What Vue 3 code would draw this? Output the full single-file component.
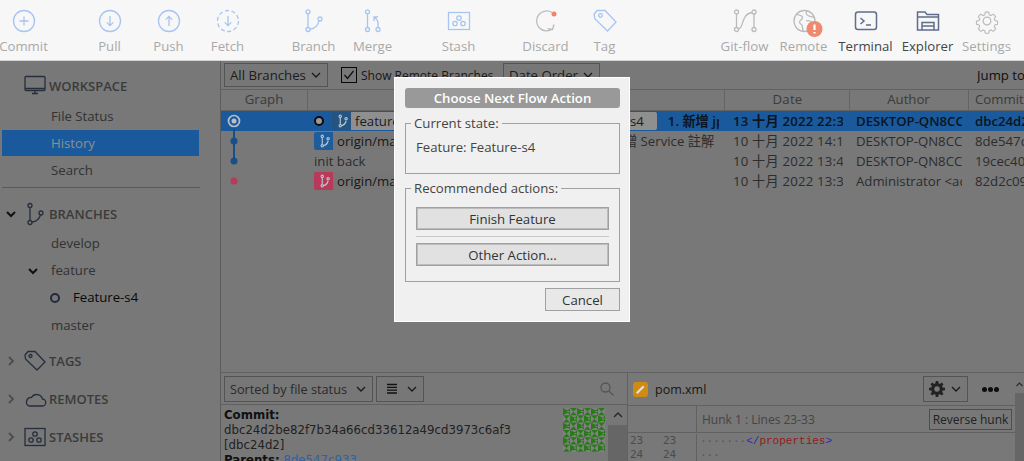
<script setup>
const rows = [
  { id: 1, date: '13 十月 2022 22:34', author: 'DESKTOP-QN8CCU1', hash: 'dbc24d2b', selected: true },
  { id: 2, date: '10 十月 2022 14:13', author: 'DESKTOP-QN8CCU1', hash: '8de547c9' },
  { id: 3, date: '10 十月 2022 13:45', author: 'DESKTOP-QN8CCU1', hash: '19cec402' },
  { id: 4, date: '10 十月 2022 13:32', author: 'Administrator <admin>', hash: '82d2c09a' }
]
const branchPath = 'M4.5 1a1 1 0 1 0 .01 0M4.5 3v6M4.5 9a1 1 0 1 0 .01 0M5.5 10c2.500-.5 3.500-2 4-4M9.500 3a1 1 0 1 0 .01 0'
const greens = []
for (let y = 0; y < 6; y++) {
  for (let x = 0; x < 6; x++) {
    const px = x * 7
    const py = y * 7.3
    greens.push((x + y) % 2 === 0
      ? `M${px} ${py}l7 3.6l-7 3.6zM${px + 7} ${py}l-3 3.6l3 3.6z`
      : `M${px} ${py}h7l-3.5 3.6zM${px} ${py + 7.3}h7l-3.5 -3.6z`)
  }
}
const identicon = greens.join('')
</script>

<template>
  <div class="app">
    <header class="toolbar">
      <div class="tool">
        <svg class="ico" viewBox="0 0 24 24"><circle cx="12" cy="12" r="10.5"/><path d="M12 7.5v9M7.5 12h9"/></svg>
        <span>Commit</span>
      </div>
      <div class="tool gap">
        <svg class="ico" viewBox="0 0 24 24"><circle cx="12" cy="12" r="10.5"/><path d="M12 7v9.5M8.8 13.4l3.2 3.2 3.2-3.2"/></svg>
        <span>Pull</span>
      </div>
      <div class="tool">
        <svg class="ico" viewBox="0 0 24 24"><circle cx="12" cy="12" r="10.5"/><path d="M12 17V7.5M8.8 10.6L12 7.4l3.2 3.2"/></svg>
        <span>Push</span>
      </div>
      <div class="tool">
        <svg class="ico" viewBox="0 0 24 24"><circle cx="12" cy="12" r="10.5" stroke-dasharray="4 2.6"/><path d="M12 7v9.5M8.8 13.4l3.2 3.2 3.2-3.2"/></svg>
        <span>Fetch</span>
      </div>
      <div class="tool gap">
        <svg class="ico" viewBox="0 0 24 24"><circle cx="6" cy="2.8" r="2"/><circle cx="6" cy="20.5" r="2"/><circle cx="18" cy="10" r="2"/><path d="M6 4.8v13.7M8 20.2c5-.5 8-3.500 9-8.500"/></svg>
        <span>Branch</span>
      </div>
      <div class="tool">
        <svg class="ico" viewBox="0 0 24 24"><circle cx="6.5" cy="2.8" r="2"/><circle cx="6.5" cy="20.5" r="2"/><circle cx="17" cy="20.5" r="2"/><path d="M6.5 4.8v13.7M17 18.500v-5c0-2-1.500-3-3.500-5.500M13 12V8h4"/></svg>
        <span>Merge</span>
      </div>
      <div class="tool gap">
        <svg class="ico" viewBox="0 0 24 24"><rect x="1.5" y="3.5" width="21" height="17"/><circle cx="12" cy="9" r="2.2"/><circle cx="8" cy="14.5" r="2.2"/><circle cx="16" cy="14.5" r="2.2"/></svg>
        <span>Stash</span>
      </div>
      <div class="tool gap discard">
        <svg class="ico" viewBox="0 0 24 24"><path class="grey" d="M18 3.500A10 10 0 1 0 18.500 20M20 15.500l-1.500 5-5-.8"/><circle class="dot" cx="20" cy="5" r="2.500"/></svg>
        <span>Discard</span>
      </div>
      <div class="tool">
        <svg class="ico" viewBox="0 0 24 24"><path d="M1 5.500L4 1.500h8l11 11.500-8.500 9L2 10z"/><circle cx="7.500" cy="6.500" r="1.800"/></svg>
        <span>Tag</span>
      </div>
      <div class="right">
        <div class="tool">
          <svg class="ico" viewBox="0 0 24 24"><g class="grey"><circle cx="3.500" cy="3" r="2"/><circle cx="3.500" cy="20.500" r="2"/><circle cx="21" cy="3" r="2"/><circle cx="21" cy="20.500" r="2"/><path d="M3.500 5v13.500M21 5v13.500M5.500 20c5.500-1 2.500-15 13.500-16.500"/></g></svg>
          <span>Git-flow</span>
        </div>
        <div class="tool">
          <svg class="ico" viewBox="0 0 24 24"><circle class="grey" cx="12.500" cy="12" r="10.500"/><path class="grey" d="M4.500 5c3 2 5 1 6 3s-3 3-3 5 3 2 3 5 1 4 1 4M15 2c-2 3 0 4 2 5s4 0 5 2M14 12c2-1 5 0 6 2"/><circle class="badge" cx="22.500" cy="20" r="8"/><path class="bang" d="M22.500 15.500v5.500M22.500 23v1.600"/></svg>
          <span>Remote</span>
        </div>
        <div class="tool active">
          <svg class="ico" viewBox="0 0 24 24"><rect x="1.500" y="3" width="21" height="17.500" rx="2.500"/><path d="M6.500 9l3.500 3-3.500 3M12 16h5"/></svg>
          <span>Terminal</span>
        </div>
        <div class="tool active">
          <svg class="ico" viewBox="0 0 24 24"><path d="M1.500 21V3h7.500l2 2.500h11.500V21zM1.500 8h21"/><path d="M6 21v-7.500h12V21M6 17h12"/></svg>
          <span>Explorer</span>
        </div>
        <div class="tool">
          <svg class="ico" viewBox="0 0 24 24"><g class="grey"><circle cx="12" cy="12" r="3.800"/><path d="M10 1.500h4l.7 3.200 2 .9 2.800-1.700 2.700 2.800-1.700 2.700.9 2.100 3 .6v3.800l-3 .7-.9 2 1.700 2.800-2.700 2.800-2.800-1.700-2 .8-.7 3.100h-4l-.7-3.100-2-.8-2.800 1.700-2.700-2.800 1.700-2.800-.9-2-3-.7v-3.800l3-.6.9-2.100-1.700-2.700 2.700-2.800 2.800 1.700 2-.9z" transform="translate(1.800 1.800) scale(.85)"/></g></svg>
          <span>Settings</span>
        </div>
      </div>
    </header>

    <div class="stage">
      <main class="main">
        <aside class="sidebar">
          <div class="head first-head">
            <i class="chev"></i>
            <svg class="side-ico" viewBox="0 0 22 22"><rect x="1" y="1.500" width="20" height="14" rx="1"/><path d="M1 13.500h20M8 18.500h6M11 15.500v3"/></svg>
            <b>WORKSPACE</b>
          </div>
          <div class="item">File Status</div>
          <div class="item on">History</div>
          <div class="item">Search</div>
          <hr class="rule">

          <div class="head branches">
            <svg class="chev" viewBox="0 0 12 12"><path class="dark" d="M2 4l4 4 4-4"/></svg>
            <svg class="side-ico" viewBox="0 0 22 22"><circle cx="6" cy="2.500" r="2"/><circle cx="6" cy="19.500" r="2"/><circle cx="17" cy="10" r="2"/><path d="M6 4.500v13M8 19c5-.5 7.500-3.500 8.500-7"/></svg>
            <b>BRANCHES</b>
          </div>
          <div class="item">develop</div>
          <div class="item parent">
            <svg class="chev small" viewBox="0 0 12 12"><path class="dark" d="M2 4l4 4 4-4"/></svg>
            feature
          </div>
          <div class="item current"><i class="ring"></i><strong>Feature-s4</strong></div>
          <div class="item last">master</div>

          <div class="head tags">
            <svg class="chev" viewBox="0 0 12 12"><path class="mid" d="M4 2l4 4-4 4"/></svg>
            <svg class="side-ico" viewBox="0 0 22 22"><path d="M1 5l3-3.500h7l10 10.500-8 8L1.500 9z"/><circle cx="6.500" cy="6" r="1.500"/></svg>
            <b>TAGS</b>
          </div>
          <div class="head next">
            <svg class="chev" viewBox="0 0 12 12"><path class="mid" d="M4 2l4 4-4 4"/></svg>
            <svg class="side-ico" viewBox="0 0 22 22"><path d="M5 18h13a3.500 3.500 0 0 0 .5-7 6 6 0 0 0-11-1.500A4.500 4.500 0 0 0 5 18z"/></svg>
            <b>REMOTES</b>
          </div>
          <div class="head next">
            <svg class="chev" viewBox="0 0 12 12"><path class="mid" d="M4 2l4 4-4 4"/></svg>
            <svg class="side-ico" viewBox="0 0 22 22"><rect x="1" y="2.500" width="20" height="17"/><circle cx="11" cy="8" r="2.200"/><circle cx="7" cy="14" r="2.200"/><circle cx="15" cy="14" r="2.200"/></svg>
            <b>STASHES</b>
          </div>
        </aside>

        <section class="content">
          <div class="filters">
            <div class="select branches-select">All Branches <svg viewBox="0 0 12 12"><path d="M2 4l4 4 4-4"/></svg></div>
            <label class="check"><span class="box"><svg viewBox="0 0 12 12"><path d="M1.500 6l3 3.500 6-7.500"/></svg></span>Show Remote Branches</label>
            <div class="select order-select">Date Order <svg viewBox="0 0 12 12"><path d="M2 4l4 4 4-4"/></svg></div>
            <span class="jump">Jump to:</span>
          </div>

          <div class="thead">
            <div class="c-graph">Graph</div>
            <div class="c-desc"></div>
            <div class="c-date">Date</div>
            <div class="c-author">Author</div>
            <div class="c-hash left">Commit</div>
          </div>

          <div class="tbody">
            <svg class="graph" viewBox="0 0 40 80">
              <path class="line" d="M13 10v40"/>
              <circle class="ring-outer" cx="13" cy="10" r="5.500"/>
              <circle class="ring-inner" cx="13" cy="10" r="2.500"/>
              <circle class="node" cx="13" cy="30" r="3.500"/>
              <circle class="node" cx="13" cy="50" r="3.500"/>
              <circle class="node red" cx="13" cy="70" r="3.500"/>
            </svg>
            <div v-for="row in rows" :key="row.id" class="row" :class="{ sel: row.selected }">
              <div class="c-graph"></div>
              <div class="c-desc">
                <template v-if="row.id === 1">
                  <i class="head-dot"></i>
                  <span class="tag-ico deep"><svg viewBox="0 0 12 12"><path :d="branchPath"/></svg></span><span class="lab first">feature/Feature-s4</span>
                  <span class="tag-ico deep"><svg viewBox="0 0 12 12"><path :d="branchPath"/></svg></span><span class="lab">origin/feature/Feature-s4</span>
                  <span class="msg strong">1. 新增 jpa</span>
                </template>
                <template v-else-if="row.id === 2">
                  <span class="tag-ico"><svg viewBox="0 0 12 12"><path :d="branchPath"/></svg></span><span class="lab">origin/master</span>
                  <span class="msg">2. 新增 Service 註解</span>
                </template>
                <template v-else-if="row.id === 3">init back</template>
                <template v-else>
                  <span class="tag-ico red"><svg viewBox="0 0 12 12"><path :d="branchPath"/></svg></span><span class="lab">origin/main</span>
                </template>
              </div>
              <div class="c-date"><span>{{ row.date }}</span></div>
              <div class="c-author"><span>{{ row.author }}</span></div>
              <div class="c-hash"><span>{{ row.hash }}</span></div>
            </div>
          </div>

          <div class="bottom">
            <div class="left-pane">
              <div class="pane-bar">
                <div class="select sort">Sorted by file status <svg viewBox="0 0 12 12"><path d="M2 4l4 4 4-4"/></svg></div>
                <div class="select view">
                  <svg class="lines" viewBox="0 0 12 12"><path d="M1 1.500h10M1 4.300h10M1 7.100h10M1 10h10"/></svg>
                  <svg viewBox="0 0 12 12"><path d="M2 4l4 4 4-4"/></svg>
                </div>
                <svg class="search" viewBox="0 0 14 14"><circle cx="5.500" cy="5.500" r="4.500"/><path d="M9 9l4.500 4.500"/></svg>
              </div>
              <div class="commit">
                <div class="commit-text">
                  <b>Commit:</b><br>
                  dbc24d2be82f7b34a66cd33612a49cd3973c6af3<br>
                  [dbc24d2]<br>
                  <b>Parents:</b> <a>8de547c933</a>
                </div>
                <svg class="avatar" viewBox="0 0 42 44"><rect width="42" height="44" fill="#808080"/><path :d="identicon" fill="#2a7a1c"/></svg>
                <div class="scroll"><svg viewBox="0 0 12 12"><path d="M2 8l4-4 4 4"/></svg><i></i></div>
              </div>
            </div>
            <div class="right-pane">
              <div class="file-bar">
                <span class="file-ico"><svg viewBox="0 0 14 14"><path d="M3.500 10.500l6.500-6.500"/></svg></span>
                <span class="file-name">pom.xml</span>
                <div class="select gear">
                  <svg class="cog" viewBox="0 0 16 16"><path d="M6.800 0h2.400l.4 2.300 1.300.6L12.800 1.500l1.700 1.700-1.400 1.900.6 1.300 2.300.4v2.400l-2.300.4-.6 1.300 1.400 1.900-1.700 1.700-1.900-1.400-1.300.6-.4 2.300H6.800l-.4-2.300-1.300-.6-1.900 1.400-1.700-1.700 1.400-1.900-.6-1.300L0 9.200V6.800l2.300-.4.6-1.300L1.500 3.200l1.700-1.700 1.900 1.400 1.300-.6zM8 5.300a2.700 2.700 0 1 0 0 5.400 2.700 2.700 0 0 0 0-5.400z" fill-rule="evenodd"/></svg>
                  <svg viewBox="0 0 12 12"><path d="M2 4l4 4 4-4"/></svg>
                </div>
                <span class="dots"><i></i><i></i><i></i></span>
              </div>
              <div class="hunk">
                <div class="gutter-head"></div>
                <span class="hunk-title">Hunk 1 : Lines 23-33</span>
                <span class="rev">Reverse hunk</span>
              </div>
              <div class="code">
                <div class="code-line"><span class="num">23</span><span class="num">23</span><code><em>·······</em><u>&lt;/</u><s>properties</s><u>&gt;</u></code></div>
                <div class="code-line"><span class="num">24</span><span class="num">24</span><code><em>···</em></code></div>
              </div>
              <div class="rscroll"><svg viewBox="0 0 12 12"><path d="M2 8l4-4 4 4"/></svg><i></i></div>
            </div>
          </div>
        </section>
      </main>

      <div class="overlay"></div>

      <div class="dialog">
        <div class="title">Choose Next Flow Action</div>
        <fieldset class="state">
          <legend>Current state:</legend>
          <p>Feature: Feature-s4</p>
        </fieldset>
        <fieldset class="actions">
          <legend>Recommended actions:</legend>
          <button>Finish Feature</button>
          <hr>
          <button>Other Action...</button>
        </fieldset>
        <div class="foot"><button>Cancel</button></div>
      </div>
    </div>
  </div>
</template>

<style>
html, body { margin: 0; overflow: hidden; }
</style>

<style scoped>
.app { width: 1024px; height: 461px; overflow: hidden; font-family: "Open Sans", "Noto Sans", "Noto Sans CJK TC", sans-serif; font-size: 13.2px; color: #444; background: #f5f5f5; display: flex; flex-direction: column; }

.toolbar { height: 60px; flex: none; display: flex; margin-left: -6px; background: #f7f7f7; border-bottom: 1px solid #d6d6d6; }
.tool { width: 59px; display: flex; flex-direction: column; align-items: center; color: #a9a9a9; padding-top: 9px; box-sizing: border-box; white-space: nowrap; }
.tool.gap { margin-left: 27px; }
.tool.discard { margin-left: 28px; }
.tool.active { color: #444; margin-left: 3px; }
.tool span { line-height: 18px; margin-top: 4px; font-size: 13.2px; }
.ico { width: 24px; height: 24px; fill: none; stroke: #a7c5f1; stroke-width: 1.3; overflow: visible; }
.ico .grey { stroke: #bbb; fill: none; }
.ico .dot { fill: #f0856c; stroke: none; }
.ico .badge { fill: #ee8a6f; stroke: none; }
.ico .bang { stroke: #fff; stroke-width: 2.2; }
.active .ico { stroke: #5f6e8a; stroke-width: 1.5; }
.right { margin-left: auto; display: flex; padding-right: 8px; }

.stage { position: relative; flex: 1; min-height: 0; }
.main { display: flex; height: 100%; background: #f0f0f0; }
.overlay { position: absolute; inset: 0; background: rgba(0, 0, 0, .5); }

.sidebar { width: 220px; flex: none; border-right: 1px solid #bbb; padding-top: 10px; color: #666; }
.head { height: 30px; display: flex; align-items: center; }
.head b { font-weight: 600; margin-left: 3px; color: #777; font-size: 13px; }
.first-head { margin-bottom: 2px; }
.branches { margin-bottom: 1px; }
.head.tags { margin-top: 7px; }
.head.next { margin-top: 8px; }
.chev { width: 12px; height: 12px; margin: 0 6px 0 5px; flex: none; display: block; fill: none; }
.chev .dark { stroke: #222; stroke-width: 2; fill: none; }
.chev .mid { stroke: #999; stroke-width: 1.8; fill: none; }
.chev.small { margin: 0 7px 0 0; }
.side-ico { width: 22px; height: 22px; margin-left: 1px; fill: none; stroke: #4c5a78; stroke-width: 1.3; flex: none; overflow: visible; }
.item { height: 27px; line-height: 27px; padding-left: 51px; color: #666; display: flex; align-items: center; }
.item.on { position: relative; z-index: 2; background: #1a5a9c; color: #8f8f8f; margin: 0 21px 1px 2px; padding-left: 49px; height: 26px; }
.item.parent { padding-left: 27px; }
.item.parent .chev { margin-right: 12px; }
.item.current { padding-left: 50px; }
.item.current strong { font-weight: 500; color: #111; margin-left: 13px; }
.item.last { margin-top: 1px; }
.ring { width: 6px; height: 6px; border: 2.5px solid #46557a; border-radius: 50%; flex: none; }
.rule { border: 0; border-top: 1px solid #b5b5b5; margin: 3px 20px 11px 2px; }

.content { flex: 1; min-width: 0; display: flex; flex-direction: column; }
.filters { height: 29px; flex: none; display: flex; align-items: center; padding-left: 3px; border-bottom: 1px solid #c2c2c2; box-sizing: border-box; }
.select { display: flex; align-items: center; height: 24px; box-sizing: border-box; border: 1px solid #a8a8a8; padding: 0 5px; justify-content: space-between; white-space: nowrap; background: #eee; color: #3c3c3c; }
.select svg { width: 12px; height: 12px; fill: none; stroke: #333; stroke-width: 1.3; flex: none; }
.branches-select { width: 104px; }
.order-select { width: 97px; margin-left: 13px; }
.check { display: flex; align-items: center; margin-left: 13px; color: #333; white-space: nowrap; width: 149px; font-size: 12px; }
.box { width: 14px; height: 14px; border: 1px solid #111; margin-right: 4px; display: flex; }
.box svg { width: 12px; height: 12px; margin: 1px; fill: none; stroke: #222; stroke-width: 1.3; }
.jump { margin-left: auto; color: #222; width: 47px; white-space: nowrap; overflow: hidden; }

.thead, .row { display: flex; height: 20px; line-height: 20px; }
.thead { color: #777; border-bottom: 1px solid #c2c2c2; height: 21px; line-height: 18px; box-sizing: border-box; text-align: center; }
.thead > div { border-right: 1px solid #c8c8c8; box-sizing: border-box; }
.c-graph { width: 87px; flex: none; }
.c-desc { width: 417px; flex: none; display: flex; align-items: center; padding-left: 6px; box-sizing: border-box; white-space: nowrap; overflow: hidden; }
.sel .c-desc { clip-path: inset(0 6px 0 0); }
.c-date { width: 125px; flex: none; padding: 0 7px 0 8px; box-sizing: border-box; white-space: nowrap; letter-spacing: .2px; }
.c-author { width: 119px; flex: none; padding: 0 7px 0 6px; box-sizing: border-box; white-space: nowrap; }
.row .c-date span, .row .c-author span { display: block; overflow: hidden; }
.c-hash { flex: 1; padding-left: 6px; overflow: hidden; white-space: nowrap; }
.thead .c-hash { border-right: 0; text-align: left; }
.tbody { position: relative; height: 261px; flex: none; }
.graph { position: absolute; left: 0; top: 0; width: 40px; height: 80px; z-index: 3; fill: none; }
.line { stroke: #174f88; stroke-width: 2; }
.ring-outer { stroke: #b9c0c8; stroke-width: 1.7; fill: #1a5a9c; }
.ring-inner { fill: #b9c0c8; }
.node { fill: #174f88; }
.node.red { fill: #b83a58; }
.row { color: #5a5a5a; }
.row.sel { position: relative; z-index: 2; background: #1a5a9c; color: #0b1522; font-weight: 600; }
.head-dot { width: 6px; height: 6px; border: 2.5px solid #0c0c0c; border-radius: 50%; background: #999; margin: 0 8px 0 0; flex: none; }
.tag-ico { position: relative; z-index: 2; width: 19px; height: 18px; background: #1f5c9c; border-radius: 2px 0 0 2px; display: flex; align-items: center; justify-content: center; flex: none; }
.tag-ico.deep { background: #24547f; }
.tag-ico.red { background: #b83a58; }
.tag-ico svg { width: 14px; height: 14px; fill: none; stroke: #b8c4d0; stroke-width: 1; }
.lab { height: 18px; line-height: 18px; background: #ececec; padding: 0 13px 0 4px; border-radius: 0 2px 2px 0; color: #333; font-weight: 400; flex: none; }
.sel .lab { background: #8f8f8f; color: #1c1c1c; }
.lab.first { width: 102px; box-sizing: border-box; overflow: hidden; margin-right: 13px; }
.msg { margin-left: 11px; flex: none; }
.row:nth-child(3) .msg { margin-left: 163px; }
.strong { font-weight: 600; color: #0b1522; }

.bottom { flex: 1; min-height: 0; display: flex; border-top: 1px solid #c2c2c2; }
.left-pane { width: 406px; flex: none; border-right: 1px solid #c2c2c2; }
.pane-bar { height: 32px; display: flex; align-items: center; padding-left: 3px; border-bottom: 1px solid #c2c2c2; box-sizing: border-box; }
.sort { width: 149px; height: 26px; color: #555; font-size: 12.7px; }
.view { width: 48px; height: 26px; margin-left: 3px; padding: 0 5px 0 9px; }
.view .lines { stroke: #222; }
.search { width: 14px; height: 14px; margin-left: auto; margin-right: 13px; fill: none; stroke: #aaa; stroke-width: 1.3; }
.commit { display: flex; height: 60px; overflow: hidden; }
.commit-text { flex: 1; font-family: "DejaVu Sans", sans-serif; font-size: 11.75px; line-height: 15px; padding: 3px 0 0 3px; color: #444; white-space: nowrap; }
.commit-text b { color: #222; }
.commit-text a { position: relative; z-index: 2; color: #2f62a5; }
.avatar { position: relative; z-index: 2; width: 42px; height: 44px; margin: 3px 3px 0 0; flex: none; }
.scroll { width: 19px; flex: none; background: #efefef; display: flex; flex-direction: column; align-items: center; padding-top: 4px; box-sizing: border-box; }
.scroll svg { width: 12px; height: 12px; fill: none; stroke: #555; stroke-width: 1.5; flex: none; }
.scroll i { display: block; width: 19px; flex: 1; background: #cdcdcd; margin-top: 4px; }

.right-pane { flex: 1; position: relative; min-width: 0; }
.file-bar { height: 33px; display: flex; align-items: center; padding-left: 5px; border-bottom: 1px solid #c2c2c2; box-sizing: border-box; }
.file-ico { position: relative; z-index: 2; width: 15px; height: 15px; background: #cf8b12; border-radius: 3px; display: flex; flex: none; }
.file-ico svg { fill: none; stroke: #e8e0d0; stroke-width: 2; }
.file-name { margin-left: 7px; color: #333; font-size: 12.5px; }
.gear { width: 45px; height: 26px; margin-left: auto; padding: 0 5px; }
.gear .cog { width: 16px; height: 16px; fill: #444; stroke: none; }
.dots { margin: 0 25px 0 14px; display: flex; gap: 1px; flex: none; }
.dots i { width: 5px; height: 5px; border-radius: 50%; background: #1a1a1a; }
.hunk { height: 27px; display: flex; align-items: center; border-bottom: 1px solid #c2c2c2; box-sizing: border-box; padding-right: 12px; }
.gutter-head { width: 68px; height: 100%; border-right: 1px solid #c2c2c2; flex: none; }
.hunk-title { margin-left: 5px; color: #8a8a8a; font-size: 12px; }
.rev { margin-left: auto; height: 21px; line-height: 19px; border: 1px solid #9a9a9a; box-sizing: border-box; width: 83px; text-align: center; color: #444; white-space: nowrap; font-size: 12px; }
.code { padding-top: 1px; }
.code-line { display: flex; height: 14px; line-height: 14px; }
.num { width: 33px; padding-left: 2px; box-sizing: border-box; color: #999; font-family: "DejaVu Sans Mono", monospace; font-size: 11px; }
.code-line code { margin-left: 2px; font-family: "Liberation Mono", monospace; font-size: 11px; border-left: 1px solid #c2c2c2; padding-left: 3px; }
.code-line em { font-style: normal; color: #aaa; }
.code-line u { position: relative; z-index: 2; text-decoration: none; color: #2a2ab0; }
.code-line s { position: relative; z-index: 2; text-decoration: none; color: #921a1a; }
.rscroll { position: absolute; right: 0; top: 0; bottom: 0; width: 9px; background: #eee; overflow: hidden; }
.rscroll svg { display: block; width: 9px; height: 9px; margin-top: 7px; fill: none; stroke: #555; stroke-width: 1.5; }
.rscroll i { display: block; height: 100%; margin-top: 4px; background: #cdcdcd; }

.dialog { position: absolute; z-index: 4; left: 394px; top: 16px; width: 236px; height: 245px; background: #f0f0f0; box-sizing: border-box; border: 1px solid #fff; padding: 10px 9px 0 10px; color: #333; }
.title { height: 20px; line-height: 20px; background: #999; border-radius: 3px; color: #fff; font-weight: 600; text-align: center; }
fieldset { margin: 0; border: 1px solid #a0a0a0; padding: 0 10px; min-width: 0; box-sizing: border-box; }
legend { padding: 0 3px; margin-left: -5px; line-height: 18px; color: #444; }
.state { height: 60px; margin-top: 6px; }
.state p { margin: 6px 0 0; color: #444; }
.actions { height: 103px; margin-top: 5px; }
.actions button { width: 100%; display: block; }
.actions button:first-of-type { margin-top: 10px; }
.actions hr { border: 0; border-top: 1px solid #c8c8c8; margin: 6px 0; }
button { height: 23px; background: #e1e1e1; border: 1px solid #a0a0a0; outline: 1px solid #bcbcbc; outline-offset: -2px; font: inherit; font-weight: 500; color: #333; padding: 0; }
.foot { display: flex; justify-content: flex-end; margin-top: 6px; }
.foot button { width: 75px; background: #e8e8e8; outline: none; }
</style>
